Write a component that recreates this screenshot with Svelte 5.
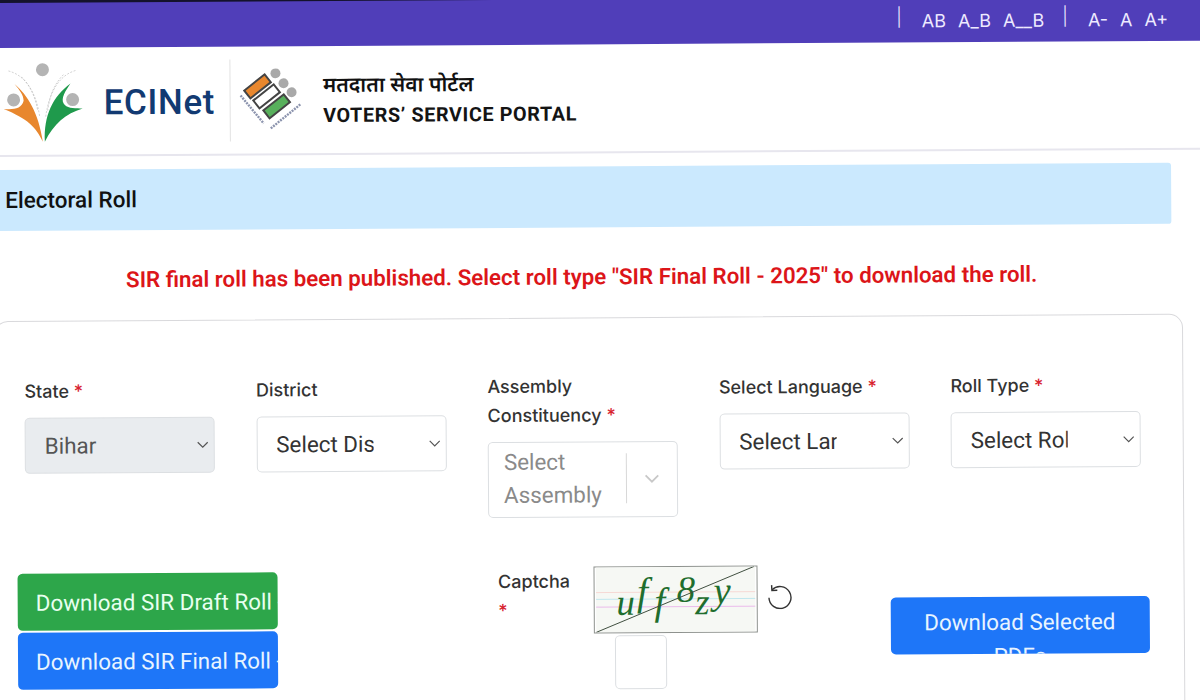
<script>
	const sizes = ['AB', 'A_B', 'A__B'];
	const zoom = ['A-', 'A', 'A+'];
</script>

<div class="page">
	<div class="topbar">
		<span class="sep">|</span>
		{#each sizes as s}<span class="tool">{s}</span>{/each}
		<span class="sep two">|</span>
		{#each zoom as z}<span class="tool">{z}</span>{/each}
	</div>

	<header>
		<svg class="eci" viewBox="0 0 84 84" aria-hidden="true">
			<g fill="none" stroke="#b5b5b5" stroke-width="0.6" stroke-dasharray="2 1.5">
				<path d="M9 10C24 14 36 28 40 56" />
				<path d="M76 10C62 14 50 28 46 56" />
				<path d="M22 16C30 24 36 36 38 50" />
				<path d="M64 14C54 24 50 36 48 50" />
			</g>
			<circle cx="43" cy="9" r="6.5" fill="#b4b4b4" />
			<circle cx="14" cy="39" r="6.5" fill="#b4b4b4" />
			<circle cx="73" cy="39" r="6.5" fill="#b4b4b4" />
			<path d="M15 23C28 34 39 52 43 81C36 66 28 58 4 48C14 49 22 48 24 40C24 34 20 29 15 23Z" fill="#e8872e" />
			<path d="M45 81C44 55 53 36 71 23C66 30 61 38 64 43C67 48 75 48 83 48C66 53 54 63 45 81Z" fill="#1f9a4c" />
		</svg>
		<span class="brand">ECINet</span>
		<span class="rule"></span>
		<svg class="evm" viewBox="0 0 68 64" aria-hidden="true">
			<circle cx="37" cy="5" r="5" fill="#a9a9a9" />
			<circle cx="45" cy="15" r="5" fill="#a9a9a9" />
			<circle cx="53" cy="24" r="5" fill="#a9a9a9" />
			<g stroke="#444" stroke-width="2">
				<rect x="-13" y="-5" width="26" height="10" fill="#e8872e" transform="translate(19 18) rotate(-38)" />
				<rect x="-13" y="-5" width="26" height="10" fill="#fff" transform="translate(28 28) rotate(-38)" />
				<rect x="-13" y="-5" width="26" height="10" fill="#58b05c" transform="translate(38 38) rotate(-38)" />
			</g>
			<g fill="none" stroke="#8b93ad" stroke-width="2.4" stroke-dasharray="2 1">
				<path d="M2 27L25 55" />
				<path d="M32 60L62 36" />
			</g>
		</svg>
		<div class="portal">
			<div class="hindi">मतदाता सेवा पोर्टल</div>
			<div class="english">VOTERS’ SERVICE PORTAL</div>
		</div>
	</header>

	<div class="band">Electoral Roll</div>

	<p class="notice">SIR final roll has been published. Select roll type "SIR Final Roll - 2025" to download the roll.</p>

	<section class="card">
		<div class="form">
			<div class="field single">
				<label for="state">State <b>*</b></label>
				<select id="state" disabled><option>Bihar</option></select>
			</div>
			<div class="field single">
				<label for="district">District</label>
				<select id="district"><option>Select District</option></select>
			</div>
			<div class="field">
				<label for="assembly">Assembly Constituency <b>*</b></label>
				<div class="combo" id="assembly">
					<span class="placeholder">Select Assembly</span>
					<span class="combo-rule"></span>
					<svg viewBox="0 0 20 20" aria-hidden="true"><path d="M3 7l7 7 7-7" fill="none" stroke="#c8c8c8" stroke-width="2" /></svg>
				</div>
			</div>
			<div class="field single">
				<label for="lang">Select Language <b>*</b></label>
				<select id="lang"><option>Select Language</option></select>
			</div>
			<div class="field single">
				<label for="roll">Roll Type <b>*</b></label>
				<select id="roll"><option>Select Roll Type</option></select>
			</div>
		</div>

		<div class="actions">
			<div class="rolls">
				<button class="green">Download SIR Draft Roll - 2025</button>
				<button class="blue">Download SIR Final Roll - 2025</button>
			</div>
			<label class="captcha-label" for="captcha">Captcha <b>*</b></label>
			<div class="captcha">
				<svg class="captcha-img" viewBox="0 0 164 67" aria-label="captcha">
					<rect width="164" height="67" fill="#f6f8f4" />
					<path d="M0 26H164" stroke="#f6d8d4" />
					<path d="M0 33H164" stroke="#bfe6ee" />
					<path d="M0 41H164" stroke="#eab9ea" />
					<g class="glyphs" fill="#1f6e2e">
						<text x="21" y="49" font-size="38">u</text>
						<text x="42" y="39" font-size="41">f</text>
						<text x="60" y="49" font-size="40">f</text>
						<text x="83" y="36" font-size="38">8</text>
						<text x="102" y="49" font-size="38">z</text>
						<text x="121" y="38" font-size="40">y</text>
					</g>
					<path d="M0 67L163 0" stroke="#3b4a3b" stroke-width="1" />
				</svg>
				<input id="captcha" class="captcha-input" />
			</div>
			<svg class="refresh" viewBox="0 0 26 26" aria-label="refresh">
				<path d="M5.5 6.5A11 11 0 1 1 2.3 14.5" fill="none" stroke="#333" stroke-width="1.4" />
				<path d="M5 1.8L5.3 7.2L10.7 7" fill="none" stroke="#333" stroke-width="1.4" />
			</svg>
			<button class="blue selected">Download Selected PDFs</button>
		</div>
	</section>
</div>

<style>
	:global(html), :global(body) {
		margin: 0;
		height: 700px;
		overflow: hidden;
		background: #fff;
	}
	.page {
		box-sizing: border-box;
		width: 1260px;
		height: 760px;
		margin-left: -20px;
		padding-left: 20px;
		overflow: hidden;
		transform: rotate(-0.35deg);
		transform-origin: 20px 0;
		font-family: Roboto, "Noto Sans", sans-serif;
		color: #222;
	}
	.topbar {
		box-sizing: border-box;
		display: flex;
		align-items: center;
		justify-content: flex-end;
		height: 48px;
		margin-left: -20px;
		padding: 2px 72px 0 0;
		border-top: 3px solid #14122c;
		background: #503eb9;
		color: #eeeaff;
		font-family: Inter, sans-serif;
		font-size: 18px;
	}
	.tool {
		margin-left: 12px;
	}
	.sep {
		margin: 0 8px 8px 0;
		font-size: 18px;
		font-weight: 300;
	}
	.sep.two {
		margin-left: 18px;
	}
	header {
		box-sizing: border-box;
		display: flex;
		align-items: center;
		height: 109px;
		margin-left: -20px;
		padding-left: 19px;
		border-bottom: 2px solid #e7e6ee;
	}
	.eci {
		width: 84px;
		height: 84px;
		flex: none;
		margin-top: 2px;
	}
	.brand {
		margin: 4px 0 0 20px;
		color: #123a72;
		font-size: 35px;
		font-weight: 500;
		letter-spacing: 0.6px;
	}
	.rule {
		width: 1px;
		height: 82px;
		margin-left: 15px;
		background: #e2e2e2;
	}
	.evm {
		width: 68px;
		height: 64px;
		flex: none;
		margin-left: 8px;
	}
	.portal {
		margin-left: 16px;
	}
	.hindi {
		color: #111;
		font-family: "Noto Sans", "DejaVu Sans", sans-serif;
		font-size: 21px;
		font-weight: 600;
		line-height: 30px;
	}
	.english {
		margin-top: 3px;
		color: #141414;
		font-size: 19.8px;
		font-weight: 700;
		letter-spacing: 0.6px;
		line-height: 28px;
	}
	.band {
		width: 1180px;
		height: 61px;
		margin: 13px 0 0 -10px;
		padding-left: 14px;
		box-sizing: border-box;
		border-radius: 3px;
		background: #cbe9fe;
		color: #111;
		font-size: 22.5px;
		font-weight: 500;
		line-height: 61px;
	}
	.notice {
		width: 1160px;
		margin: 34px 0 -1px;
		color: #dc1519;
		font-size: 22.3px;
		font-weight: 600;
		line-height: 30px;
		text-align: center;
		white-space: nowrap;
	}
	.card {
		box-sizing: border-box;
		width: 1189px;
		height: 500px;
		margin: 27px 0 0 -8px;
		padding: 53px 0 0 29px;
		border: 1px solid #d9d9dc;
		border-radius: 14px;
	}
	.form {
		display: grid;
		grid-template-columns: repeat(5, 190px);
		column-gap: 41.5px;
		align-items: start;
	}
	.field.single {
		padding-top: 2px;
	}
	.field label {
		display: block;
		margin-bottom: 12px;
		line-height: 29px;
		font-family: Inter, sans-serif;
		font-size: 18px;
		font-weight: 500;
		color: #333;
	}
	b {
		color: #d8232f;
		font-weight: 500;
	}
	select {
		display: block;
		box-sizing: border-box;
		width: 190px;
		height: 56px;
		padding: 0 72px 0 19px;
		border: 1px solid #dcdfe2;
		border-radius: 5px;
		appearance: none;
		background: #fff url("data:image/svg+xml,%3Csvg xmlns='http://www.w3.org/2000/svg' viewBox='0 0 12 8'%3E%3Cpath d='M1 1.5l5 5 5-5' fill='none' stroke='%23555' stroke-width='1.2'/%3E%3C/svg%3E") no-repeat right 5px center / 12px 8px;
		color: #333;
		font-family: Roboto, sans-serif;
		font-size: 22.4px;
		opacity: 1;
	}
	select:disabled {
		background-color: #e9ecef;
		color: #555;
	}
	.combo {
		box-sizing: border-box;
		display: flex;
		align-items: center;
		width: 190px;
		height: 76px;
		padding: 0 0 3px 15px;
		border: 1px solid #dcdfe2;
		border-radius: 5px;
	}
	.placeholder {
		width: 122px;
		color: #8a8a8a;
		font-size: 22.4px;
		line-height: 33px;
	}
	.combo-rule {
		width: 1px;
		height: 50px;
		background: #d8d8d8;
	}
	.combo svg {
		width: 18px;
		height: 18px;
		margin-left: 16px;
	}
	.actions {
		display: flex;
		align-items: flex-start;
		margin-top: 49px;
	}
	.rolls {
		flex: none;
		display: flex;
		flex-direction: column;
		gap: 2px;
		width: 260px;
		margin: 4px 0 0 -8px;
	}
	button {
		box-sizing: border-box;
		display: block;
		border: none;
		border-radius: 5px;
		overflow: hidden;
		color: #e8fff0;
		font-family: Roboto, sans-serif;
		font-size: 22.4px;
		cursor: pointer;
	}
	.rolls button {
		width: 260px;
		height: 57px;
		padding: 0 0 0 18px;
		white-space: nowrap;
		text-align: left;
	}
	.green {
		background: #2da64a;
	}
	.blue {
		background: #1e76f8;
		color: #e8f4ff;
	}
	.captcha-label {
		box-sizing: border-box;
		flex: none;
		width: 95px;
		margin-left: 220.5px;
		padding-right: 18px;
		line-height: 29px;
		font-family: Inter, sans-serif;
		font-size: 18px;
		font-weight: 500;
		color: #333;
	}
	.captcha {
		flex: none;
		width: 164px;
	}
	.captcha-img {
		display: block;
		box-sizing: border-box;
		width: 164px;
		height: 67px;
		border: 1.5px solid #8e928e;
	}
	.glyphs {
		font-family: "Liberation Serif", serif;
		font-style: italic;
	}
	.captcha-input {
		display: block;
		box-sizing: border-box;
		width: 52px;
		height: 54px;
		margin: 2px 0 0 21px;
		border: 1px solid #dcdfe2;
		border-radius: 5px;
	}
	.refresh {
		flex: none;
		width: 26px;
		height: 26px;
		margin: 18px 0 0 9px;
	}
	.selected {
		flex: none;
		width: 259px;
		height: 57px;
		margin: 33px 0 0 98px;
		padding: 8px 24px 0;
		line-height: 34px;
		display: block;
	}
</style>
